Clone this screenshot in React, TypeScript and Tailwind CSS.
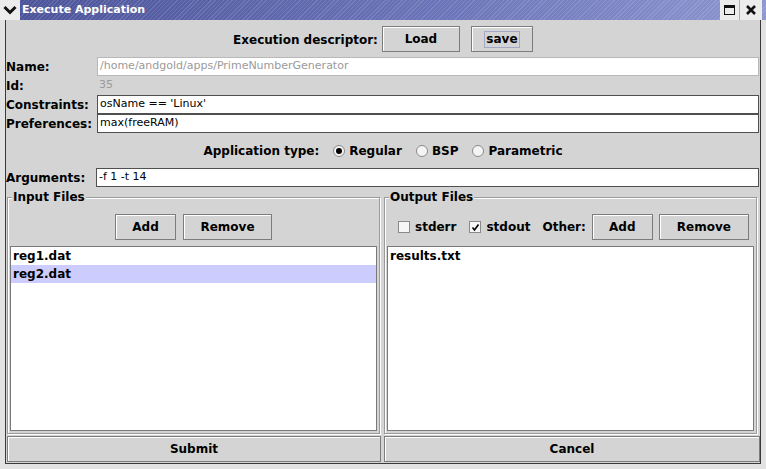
import { useState } from 'react'

const btn =
  'h-[26px] bg-[#d4d4d4] border border-[#7c7c7c] shadow-[inset_1px_1px_0_#ffffff] text-[12px] font-bold text-black flex items-center justify-center'

const group =
  'relative w-[373px] shrink-0 mt-[7px] border border-[#9a9a9a] shadow-[inset_1px_1px_0_#ffffff,1px_1px_0_#ffffff] flex flex-col px-[2px] pb-[2px]'

function Radio({ checked, label }: { checked?: boolean; label: string }) {
  return (
    <div className="flex items-center gap-[4px]">
      <div className="w-[12px] h-[12px] rounded-full border border-[#8a8a8a] bg-[#f4f4f4] flex items-center justify-center">
        {checked && <div className="w-[6px] h-[6px] rounded-full bg-black" />}
      </div>
      <span>{label}</span>
    </div>
  )
}

function Check({ checked, label }: { checked?: boolean; label: string }) {
  return (
    <div className="flex items-center gap-[5px]">
      <div className="w-[12px] h-[12px] border border-[#8a8a8a] bg-[#f6f6f6] flex items-center justify-center">
        {checked && (
          <svg width="9" height="9" viewBox="0 0 9 9">
            <path d="M1.5 4.5 L3.5 7 L7.5 1.5" stroke="#000" strokeWidth="1.6" fill="none" />
          </svg>
        )}
      </div>
      <span>{label}</span>
    </div>
  )
}

function Field({ label, value, kind }: { label: string; value: string; kind: 'disabled' | 'plain' | 'edit' }) {
  return (
    <div className="flex items-stretch h-[19px]">
      <div className="w-[91px] shrink-0 flex items-center text-[12px] font-bold">{label}</div>
      <div
        className={`flex-1 mr-[1px] flex items-center px-[2px] text-[11px] font-normal ${
          kind === 'disabled'
            ? 'bg-white border border-[#b8b8b8] text-[#9a9a9a]'
            : kind === 'plain'
            ? 'text-[#9a9a9a]'
            : 'bg-white border border-[#505050] text-black'
        }`}
      >
        {value}
      </div>
    </div>
  )
}

export default function App() {
  const [sel, setSel] = useState(1)
  const inputs = ['reg1.dat', 'reg2.dat']

  return (
    <div className="w-[766px] h-[469px] bg-[#e2e2e2] flex flex-col font-['DejaVu_Sans',sans-serif] text-black overflow-hidden">
      {/* Title bar */}
      <div className="h-[20px] shrink-0 flex items-center bg-[linear-gradient(to_right,#4a5298,#6d76ba_60%,#8d95cf)] relative">
        <div className="absolute inset-0 bg-[repeating-linear-gradient(135deg,transparent_0px,transparent_2px,rgba(255,255,255,0.12)_2px,rgba(255,255,255,0.12)_3px)]" />
        <div className="relative w-[20px] h-[20px] bg-[#ececec] flex items-center justify-center">
          <svg width="14" height="10" viewBox="0 0 14 10">
            <path d="M1.5 2 L7 7.5 L12.5 2" stroke="#111" strokeWidth="3" fill="none" />
          </svg>
        </div>
        <span className="relative ml-[2px] text-[11px] font-bold text-white">Execute Application</span>
        <div className="flex-1" />
        <div className="relative w-[20px] h-[20px] bg-[#ececec] flex items-center justify-center border-r border-[#b0b0b0]">
          <div className="w-[11px] h-[10px] border border-[#111] border-t-[3px]" />
        </div>
        <div className="relative w-[22px] h-[20px] bg-[#ececec] flex items-center justify-center mr-[4px]">
          <svg width="12" height="12" viewBox="0 0 12 12">
            <path d="M2 2 L10 10 M10 2 L2 10" stroke="#111" strokeWidth="2.6" />
          </svg>
        </div>
      </div>

      {/* Window body */}
      <div className="mx-[5px] w-[756px] h-[444px] bg-[#d4d4d4] border-x border-b border-[#3a3a3a] flex flex-col text-[12px] font-bold">
        {/* Execution descriptor */}
        <div className="h-[37px] flex items-start justify-center pt-[6px]">
          <span className="self-center mr-[4px] -mt-[3px]">Execution descriptor:</span>
          <button className={`${btn} w-[78px]`}>Load</button>
          <button className={`${btn} w-[62px] ml-[11px]`}>
            <span className="border border-[#a4a8c8] px-[1px] leading-[15px]">save</span>
          </button>
        </div>

        <Field label="Name:" value="/home/andgold/apps/PrimeNumberGenerator" kind="disabled" />
        <Field label="Id:" value="35" kind="plain" />
        <Field label="Constraints:" value="osName == 'Linux'" kind="edit" />
        <Field label="Preferences:" value="max(freeRAM)" kind="edit" />

        {/* Application type */}
        <div className="h-[35px] flex items-center justify-center gap-[14px]">
          <span>Application type:</span>
          <Radio checked label="Regular" />
          <Radio label="BSP" />
          <Radio label="Parametric" />
        </div>

        <div className="flex items-stretch h-[19px]">
          <div className="w-[90px] shrink-0 flex items-center">Arguments:</div>
          <div className="flex-1 mr-[1px] flex items-center px-[2px] text-[11px] font-normal bg-white border border-[#505050]">
            -f 1 -t 14
          </div>
        </div>

        {/* Groups */}
        <div className="flex-1 flex gap-[4px] pl-[1px] pt-[3px] pb-[2px]">
          <div className={group}>
            <span className="absolute -top-[8px] left-[4px] px-[1px] leading-[14px] bg-[#d4d4d4]">Input Files</span>
            <div className="flex justify-center gap-[7px] mt-[16px]">
              <button className={`${btn} w-[61px]`}>Add</button>
              <button className={`${btn} w-[89px]`}>Remove</button>
            </div>
            <div className="mt-[6px] flex-1 bg-white border border-[#7a7a7a]">
              {inputs.map((f, i) => (
                <div
                  key={f}
                  onClick={() => setSel(i)}
                  className={`h-[18px] flex items-center pl-[2px] ${sel === i ? 'bg-[#ccccff]' : ''}`}
                >
                  {f}
                </div>
              ))}
            </div>
          </div>

          <div className={group}>
            <span className="absolute -top-[8px] left-[4px] px-[1px] leading-[14px] bg-[#d4d4d4]">Output Files</span>
            <div className="flex items-center mt-[16px] pl-[11px]">
              <Check label="stderr" />
              <div className="ml-[13px]">
                <Check checked label="stdout" />
              </div>
              <span className="ml-[12px]">Other:</span>
              <button className={`${btn} w-[61px] ml-[6px]`}>Add</button>
              <button className={`${btn} w-[90px] ml-[6px]`}>Remove</button>
            </div>
            <div className="mt-[6px] flex-1 bg-white border border-[#7a7a7a]">
              <div className="h-[18px] flex items-center pl-[2px]">results.txt</div>
            </div>
          </div>
        </div>

        {/* Bottom buttons */}
        <div className="h-[27px] flex gap-[3px] pl-[1px] pb-[1px]">
          <button className={`${btn} w-[374px] h-[26px]`}>Submit</button>
          <button className={`${btn} flex-1 h-[26px]`}>Cancel</button>
        </div>
      </div>
    </div>
  )
}
